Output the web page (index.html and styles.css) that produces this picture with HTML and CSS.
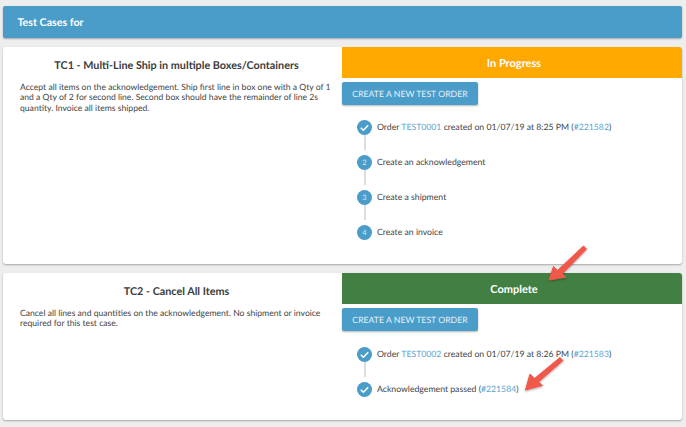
FILE: index.html
```html
<!DOCTYPE html>
<html lang="en">
<head>
<meta charset="utf-8">
<title>Test Cases</title>
<link rel="stylesheet" href="styles.css">
</head>
<body>
<main class="page">
  <header class="banner">Test Cases for</header>

  <section class="card card-first">
    <div class="info">
      <h2 class="title">TC1 - Multi-Line Ship in multiple Boxes/Containers</h2>
      <p class="desc">Accept all items on the acknowledgement. Ship first line in box one with a Qty of 1 and a Qty of 2 for second line. Second box should have the remainder of line 2s quantity. Invoice all items shipped.</p>
    </div>
    <div class="run">
      <div class="status status-progress">In Progress</div>
      <button class="btn" type="button">CREATE A NEW TEST ORDER</button>
      <ol class="steps">
        <li class="step">
          <span class="dot"><svg class="check" viewBox="0 0 16 16"><path d="M4 8.300l2.800 2.700L12 5.600"/></svg></span>
          <span class="step-text">Order <a class="link">TEST0001</a> created on 01/07/19 at 8:25 PM (<a class="link">#221582</a>)</span>
        </li>
        <li class="step"><span class="dot">2</span><span class="step-text">Create an acknowledgement</span></li>
        <li class="step"><span class="dot">3</span><span class="step-text">Create a shipment</span></li>
        <li class="step"><span class="dot">4</span><span class="step-text">Create an invoice</span></li>
      </ol>
    </div>
  </section>

  <section class="card card-second">
    <div class="info">
      <h2 class="title">TC2 - Cancel All Items</h2>
      <p class="desc">Cancel all lines and quantities on the acknowledgement. No shipment or invoice required for this test case.</p>
    </div>
    <div class="run">
      <div class="status status-complete">Complete</div>
      <button class="btn" type="button">CREATE A NEW TEST ORDER</button>
      <ol class="steps">
        <li class="step">
          <span class="dot"><svg class="check" viewBox="0 0 16 16"><path d="M4 8.300l2.800 2.700L12 5.600"/></svg></span>
          <span class="step-text">Order <a class="link">TEST0002</a> created on 01/07/19 at 8:26 PM (<a class="link">#221583</a>)</span>
        </li>
        <li class="step">
          <span class="dot"><svg class="check" viewBox="0 0 16 16"><path d="M4 8.300l2.800 2.700L12 5.600"/></svg></span>
          <span class="step-text">Acknowledgement passed (<a class="link">#221584</a>)</span>
        </li>
      </ol>
    </div>
  </section>
</main>

<svg class="arrows" viewBox="0 0 686 427" aria-hidden="true">
  <defs>
    <filter id="arrow-shadow" x="-30%" y="-30%" width="160%" height="160%">
      <feDropShadow dx="0" dy="1" stdDeviation="1" flood-color="#000" flood-opacity="0.35"/>
    </filter>
  </defs>
  <g class="arrow" filter="url(#arrow-shadow)">
    <path d="M549 280L553.500 266.500L557.500 270.500L583.500 246L586.500 249L562 274L566 277Z"/>
    <path d="M525.500 390L530 374L534.500 378.500L560 357.500L563 360.500L538.500 382L542.500 385.500Z"/>
  </g>
</svg>
</body>
</html>
```
FILE: styles.css
```css
* {
  box-sizing: border-box;
}

html,
body {
  margin: 0;
  height: 100%;
}

body {
  position: relative;
  width: 686px;
  height: 427px;
  overflow: hidden;
  background: #eeeeee;
  color: #444444;
  font-family: Lato, "Liberation Sans", sans-serif;
  font-size: 8.7px;
  text-rendering: geometricPrecision;
}

.page {
  display: flex;
  flex-direction: column;
  gap: 9px;
  padding: 6px 4px 0 3px;
}

.banner {
  display: flex;
  align-items: center;
  height: 32px;
  padding-left: 14.5px;
  border-radius: 2px;
  background: #4a9cc9;
  box-shadow: 0 1px 2px rgba(0, 0, 0, 0.3);
  color: #ffffff;
  font-size: 10.7px;
  font-weight: 700;
}

.card {
  display: grid;
  grid-template-columns: 339px 1fr;
  border-radius: 3px;
  background: #ffffff;
  box-shadow: 0 1px 2px rgba(0, 0, 0, 0.3);
}

.card-first {
  height: 217px;
}

.card-second {
  height: 147px;
}

.info {
  padding: 11px 17px 0;
}

.title {
  margin: 0 0 8.5px;
  padding-left: 8px;
  color: #3c3c3c;
  font-size: 10.8px;
  font-weight: 700;
  line-height: 15px;
  text-align: center;
}

.desc {
  margin: 0;
  width: 314px;
  font-size: 8.62px;
  line-height: 10.7px;
}

.run {
  display: flex;
  flex-direction: column;
  align-items: flex-start;
}

.status {
  display: flex;
  align-items: center;
  justify-content: center;
  align-self: stretch;
  height: 31px;
  padding: 1px 0 0 4px;
  border-radius: 0 3px 0 0;
  color: #ffffff;
  font-size: 11px;
  font-weight: 700;
}

.status-progress {
  background: #ffa800;
}

.status-complete {
  background: #427f42;
}

.btn {
  width: 136px;
  height: 23px;
  margin-top: 4px;
  padding: 0;
  border: 0;
  border-radius: 2px;
  background: #4a9cc9;
  box-shadow: 0 1px 2px rgba(0, 0, 0, 0.3);
  color: #e4f1f8;
  font-family: inherit;
  font-size: 8.7px;
  text-rendering: geometricPrecision;
}

.steps {
  display: flex;
  flex-direction: column;
  gap: 20px;
  margin: 14.5px 0 0;
  padding: 0 0 0 15px;
  list-style: none;
}

.card-second .steps {
  margin-top: 15.5px;
}

.step {
  position: relative;
  display: flex;
  align-items: center;
  gap: 5px;
  height: 15px;
  white-space: nowrap;
}

.step:not(:last-child)::after {
  content: "";
  position: absolute;
  top: 15px;
  left: 7px;
  width: 2px;
  height: 15px;
  background: #dddddd;
}

.step-text {
  padding-bottom: 2px;
}

.dot {
  display: flex;
  align-items: center;
  justify-content: center;
  flex: none;
  width: 15px;
  height: 15px;
  border-radius: 50%;
  background: #4a9cc9;
  color: #d5e8f3;
  font-size: 7.5px;
}

.check {
  width: 15px;
  height: 15px;
  fill: none;
  stroke: #ffffff;
  stroke-width: 1.6;
}

.link {
  color: #5aa5d0;
}

.arrows {
  position: absolute;
  top: 0;
  left: 0;
  width: 686px;
  height: 427px;
  pointer-events: none;
}

.arrow {
  fill: #f0584a;
  stroke: #f0584a;
  stroke-linejoin: round;
}
```
